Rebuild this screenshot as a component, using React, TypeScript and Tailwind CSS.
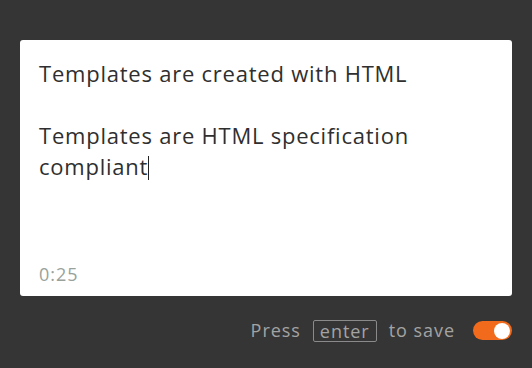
import { useState } from 'react';

const App = () => {
  const [enabled, setEnabled] = useState(true);

  return (
    <div
      className="w-[532px] h-[368px] bg-[#353535] flex flex-col px-5 pt-10 tracking-[0.06em]"
      style={{ fontFamily: '"Open Sans", "Liberation Sans", sans-serif' }}
    >
      <div className="h-[256px] bg-white rounded-[3px] flex flex-col justify-between px-[19px] pt-[18px] pb-[8px]">
        <div className="text-[22px] leading-[31px] tracking-[0.035em] text-[#2f2f2f]">
          <p>Templates are created with HTML</p>
          <p>&nbsp;</p>
          <p>
            Templates are HTML specification compliant
            <span className="inline-block w-px h-[24px] bg-[#222] align-[-5px]"></span>
          </p>
        </div>
        <div className="text-[18px] text-[#98a29a]">0:25</div>
      </div>

      <div className="flex items-center justify-end gap-3 mt-[21px] text-[18px] text-[#a3a3a3]">
        <span>Press</span>
        <span className="border border-[#8a8a8a] rounded-[2px] px-[6px] leading-[20px]">enter</span>
        <span>to save</span>
        <button
          type="button"
          onClick={() => setEnabled(!enabled)}
          className={`ml-[6px] w-[39px] h-[19px] rounded-full flex items-center px-[2px] ${
            enabled ? 'bg-[#f26a1b] justify-end' : 'bg-[#666] justify-start'
          }`}
        >
          <span className="w-[16px] h-[16px] rounded-full bg-white"></span>
        </button>
      </div>
    </div>
  );
};

export default App;
